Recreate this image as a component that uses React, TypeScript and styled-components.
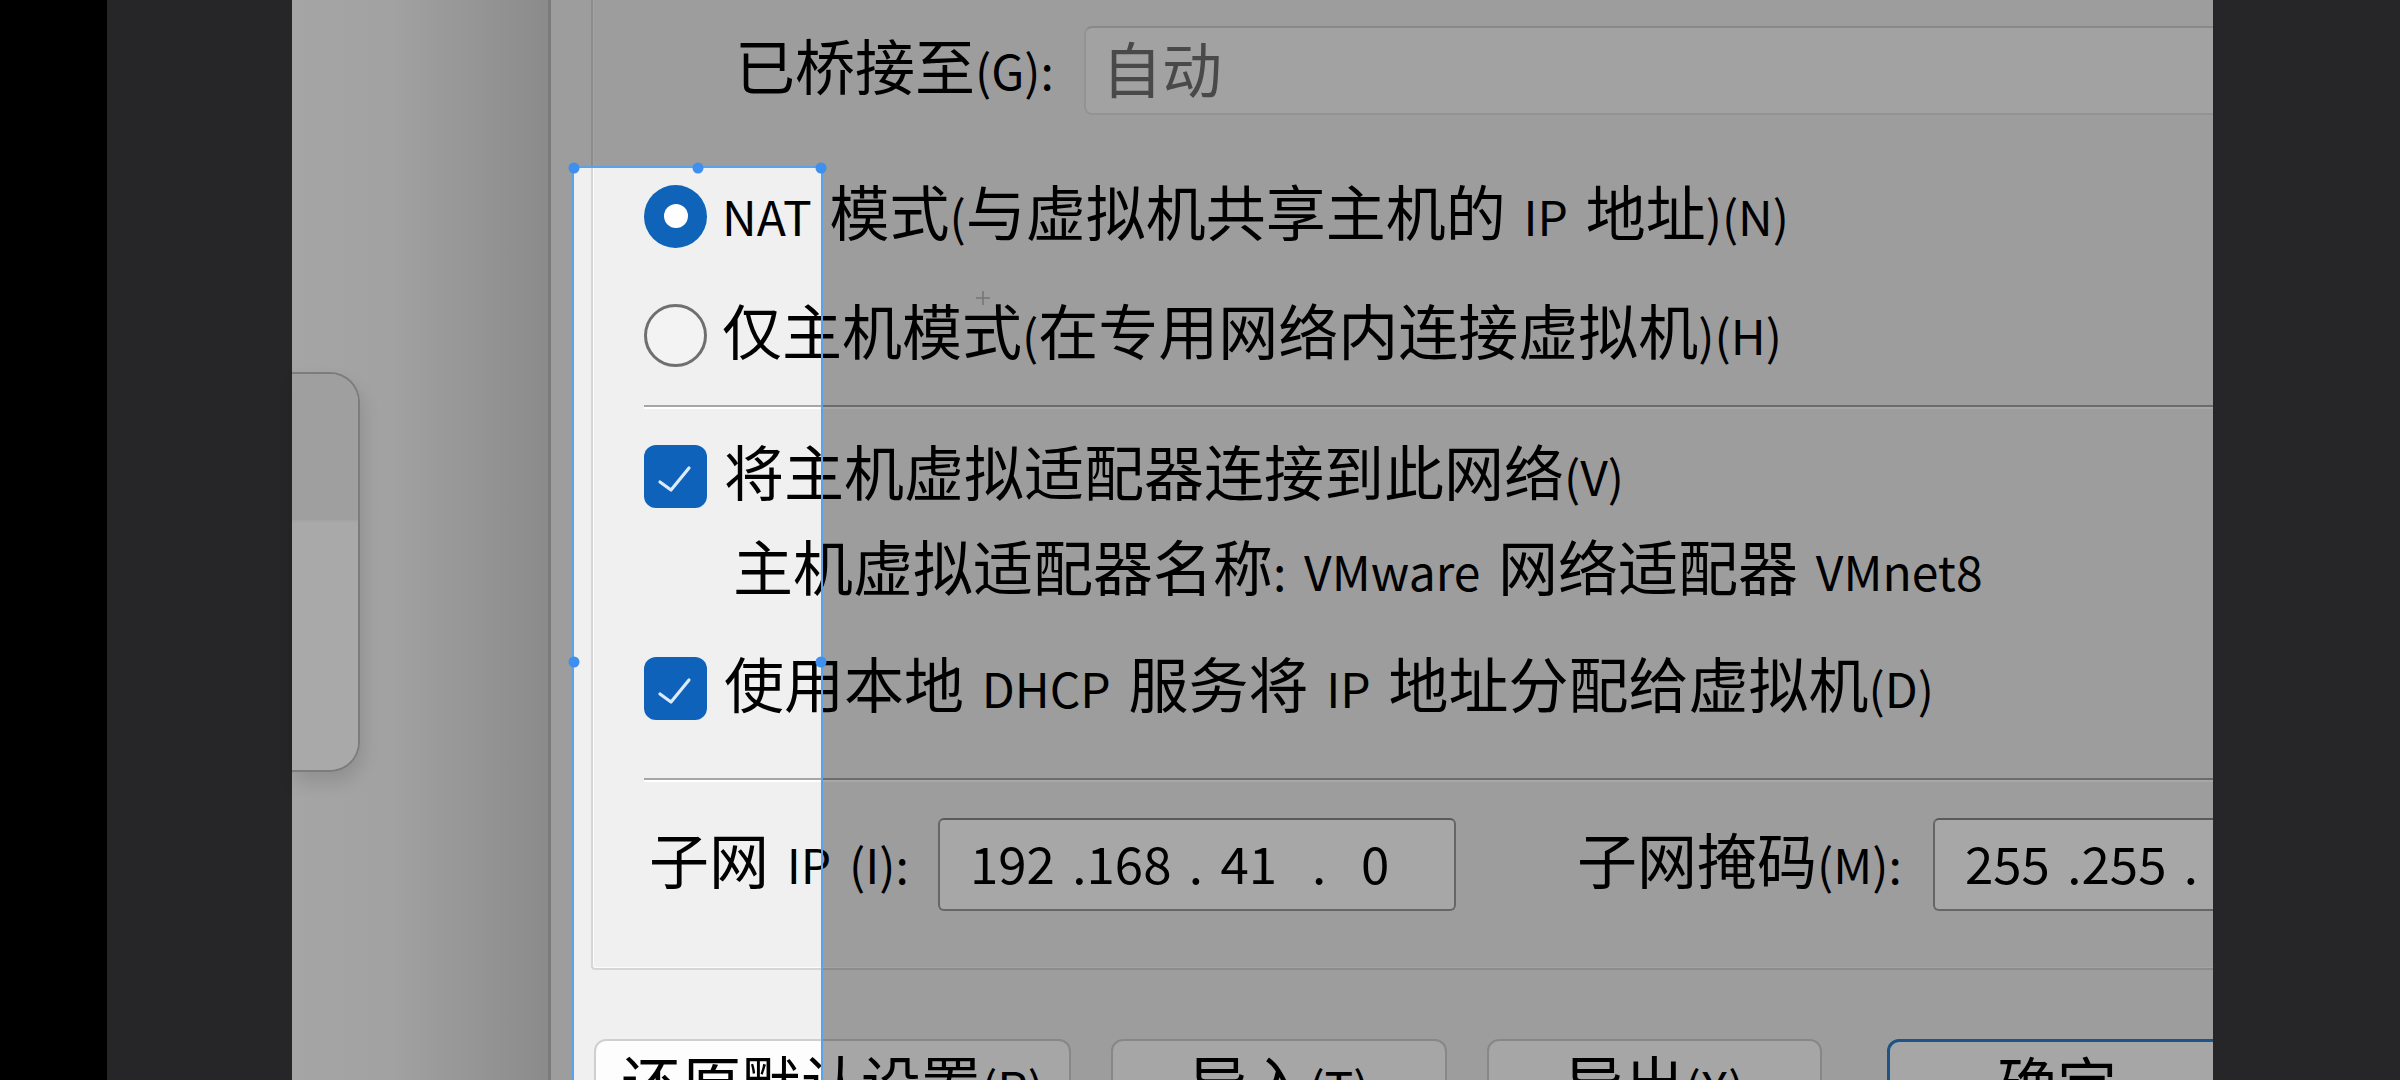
import React from "react";
import styled, { createGlobalStyle, css } from "styled-components";

const GlobalStyle = createGlobalStyle`
  html, body {
    margin: 0;
    padding: 0;
    background: #000;
  }
  body {
    width: 2400px;
    height: 1080px;
    overflow: hidden;
    font-family: "Noto Sans CJK SC", "Noto Sans", sans-serif;
  }
`;

const Screen = styled.div`
  display: flex;
  width: 2400px;
  height: 1080px;
  overflow: hidden;
  background: #000;
`;

const BlackBar = styled.div`
  flex: none;
  width: 107px;
  background: #000;
`;

const SideBar = styled.div<{ $w: number }>`
  flex: none;
  width: ${(p) => p.$w}px;
  background: #262628;
`;

const Backdrop = styled.div`
  flex: none;
  box-sizing: border-box;
  width: 259px;
  padding-top: 372px;
  border-right: 3px solid #7b7b7b;
  background: linear-gradient(90deg, #a5a5a5 0%, #a2a2a2 38%, #959595 72%, #8b8b8b 100%);
`;

const BackCard = styled.div`
  width: 66px;
  height: 396px;
  display: flex;
  flex-direction: column;
  overflow: hidden;
  border: 2px solid #7c7c7c;
  border-left: none;
  border-radius: 0 30px 30px 0;
  box-shadow: 3px 10px 18px rgba(0, 0, 0, 0.12);
`;

const CardTop = styled.div`
  height: 146px;
  background: #9f9f9f;
  border-bottom: 2px solid #a4a4a4;
`;

const CardBottom = styled.div`
  flex: 1;
  background: #a9a9a9;
`;

const Dialog = styled.div`
  position: relative;
  flex: none;
  width: 1662px;
  height: 1080px;
  overflow: hidden;
  background: #f0f0f0;
  color: #000;
  font-size: 60px;
`;

const GroupBox = styled.div`
  display: flex;
  flex-direction: column;
  margin-left: 40px;
  padding: 26px 0 57px 51px;
  border-left: 2px solid #d6d6d6;
  border-bottom: 2px solid #d6d6d6;
  border-bottom-left-radius: 4px;
  box-shadow: inset 1px -1px 0 #fbfbfb;
`;

const Lat = styled.span`
  font-size: 48px;
  word-spacing: 7px;
`;

const Text = styled.span`
  padding-bottom: 8px;
`;

const TopRow = styled.div`
  display: flex;
  align-items: center;
  height: 89px;
  padding-left: 91px;
  white-space: nowrap;
`;

const BridgeLabel = styled.span`
  flex: none;
  width: 349px;
  line-height: 80px;
  padding-bottom: 8px;
`;

const Select = styled.div`
  flex: 1;
  box-sizing: border-box;
  height: 89px;
  display: flex;
  align-items: center;
  padding: 0 0 8px 16px;
  background: #f8f8f8;
  border: 2px solid #e0e0e0;
  border-right: none;
  border-top-color: #d2d2d2;
  border-radius: 8px 0 0 8px;
  color: #707070;
`;

const OptionRow = styled.div<{ $mt: number }>`
  display: flex;
  align-items: center;
  height: 80px;
  line-height: 80px;
  margin-top: ${(p) => p.$mt}px;
  white-space: nowrap;
`;

const Radio = styled.span<{ $checked?: boolean }>`
  flex: none;
  box-sizing: border-box;
  width: 63px;
  height: 63px;
  margin-right: 15px;
  border-radius: 50%;
  display: flex;
  align-items: center;
  justify-content: center;
  ${(p) =>
    p.$checked
      ? css`
          background: #0f63b8;
        `
      : css`
          border: 3px solid #6f6f6f;
          background: #f3f3f3;
        `}
`;

const RadioDot = styled.span`
  width: 24px;
  height: 24px;
  border-radius: 50%;
  background: #fff;
`;

const Checkbox = styled.span`
  flex: none;
  width: 63px;
  height: 63px;
  margin-right: 17px;
  border-radius: 12px;
  background: #0f62ba;
  display: flex;
`;

const SubLabel = styled.div`
  margin-top: 18px;
  height: 70px;
  line-height: 62px;
  padding-left: 89px;
  white-space: nowrap;
`;

const Separator = styled.div<{ $mt: number }>`
  flex: none;
  margin-top: ${(p) => p.$mt}px;
  height: 2px;
  background: #a6a6a6;
  border-bottom: 2px solid #ffffff;
`;

const SubnetRow = styled.div`
  display: flex;
  align-items: center;
  margin-top: 36px;
  height: 93px;
  padding-left: 5px;
  white-space: nowrap;
`;

const FieldLabel = styled.span<{ $w: number; $ml?: number }>`
  flex: none;
  width: ${(p) => p.$w}px;
  margin-left: ${(p) => p.$ml ?? 0}px;
  line-height: 80px;
  padding-bottom: 8px;
`;

const IpBox = styled.div<{ $w?: number }>`
  box-sizing: border-box;
  height: 93px;
  ${(p) =>
    p.$w
      ? css`
          flex: none;
          width: ${p.$w}px;
        `
      : css`
          flex: 1;
          border-right: none;
        `}
  display: flex;
  align-items: center;
  padding: 0 0 6px 30px;
  background: #ffffff;
  border: 2px solid #9c9c9c;
  border-top-color: #8a8a8a;
  border-radius: 6px;
  font-size: 51px;
  white-space: pre;
  word-spacing: 6px;
`;

const ButtonRow = styled.div`
  display: flex;
  gap: 40px;
  margin-top: 69px;
  padding-left: 43px;
`;

const DialogButton = styled.div<{ $w: number; $primary?: boolean }>`
  flex: none;
  box-sizing: border-box;
  width: ${(p) => p.$w}px;
  height: 110px;
  background: #fdfdfd;
  border: 2px solid #cfcfcf;
  border-radius: 12px;
  text-align: center;
  line-height: 80px;
  white-space: nowrap;
  ${(p) =>
    p.$primary &&
    css`
      margin-left: 25px;
      border: 3px solid #2f7fcf;
    `}
`;

const Crosshair = styled.svg`
  position: absolute;
  left: 424px;
  top: 290px;
  width: 16px;
  height: 16px;
`;

const Selection = styled.div`
  position: absolute;
  left: 21px;
  top: 166px;
  width: 251px;
  height: 992px;
  box-sizing: border-box;
  border: 2px solid #5aa3ea;
  box-shadow: 0 0 0 4000px rgba(0, 0, 0, 0.345);
  z-index: 2;
`;

const Handle = styled.span<{ $x: string; $y: string }>`
  position: absolute;
  left: ${(p) => p.$x};
  top: ${(p) => p.$y};
  width: 11px;
  height: 11px;
  border-radius: 50%;
  background: #3d8ff0;
  transform: translate(-50%, -50%);
`;

const CheckMark = () => (
  <svg width="63" height="63" viewBox="0 0 63 63">
    <polyline
      points="16,37 27,45 45,23"
      fill="none"
      stroke="#dcebfb"
      strokeWidth="3.2"
      strokeLinecap="round"
      strokeLinejoin="round"
    />
  </svg>
);

export default function App() {
  return (
    <>
      <GlobalStyle />
      <Screen>
        <BlackBar />
        <SideBar $w={185} />
        <Backdrop>
          <BackCard>
            <CardTop />
            <CardBottom />
          </BackCard>
        </Backdrop>
        <Dialog>
          <GroupBox>
            <TopRow>
              <BridgeLabel>
                已桥接至<Lat>(G):</Lat>
              </BridgeLabel>
              <Select>自动</Select>
            </TopRow>

            <OptionRow $mt={61}>
              <Radio $checked>
                <RadioDot />
              </Radio>
              <Text>
                <Lat>NAT </Lat>模式<Lat>(</Lat>与虚拟机共享主机的<Lat> IP </Lat>地址<Lat>)(N)</Lat>
              </Text>
            </OptionRow>

            <OptionRow $mt={39}>
              <Radio />
              <Text>
                仅主机模式<Lat>(</Lat>在专用网络内连接虚拟机<Lat>)(H)</Lat>
              </Text>
            </OptionRow>

            <Separator $mt={30} />

            <OptionRow $mt={27}>
              <Checkbox>
                <CheckMark />
              </Checkbox>
              <Text>
                将主机虚拟适配器连接到此网络<Lat>(V)</Lat>
              </Text>
            </OptionRow>

            <SubLabel>
              主机虚拟适配器名称<Lat>: VMware </Lat>网络适配器<Lat> VMnet8</Lat>
            </SubLabel>

            <OptionRow $mt={44}>
              <Checkbox>
                <CheckMark />
              </Checkbox>
              <Text>
                使用本地<Lat> DHCP </Lat>服务将<Lat> IP </Lat>地址分配给虚拟机<Lat>(D)</Lat>
              </Text>
            </OptionRow>

            <Separator $mt={50} />

            <SubnetRow>
              <FieldLabel $w={289}>
                子网<Lat> IP (I):</Lat>
              </FieldLabel>
              <IpBox $w={518}>{"192 .168 . 41  .  0"}</IpBox>
              <FieldLabel $w={356} $ml={121}>
                子网掩码<Lat>(M):</Lat>
              </FieldLabel>
              <IpBox>{"255 .255 .   255 .  0"}</IpBox>
            </SubnetRow>
          </GroupBox>

          <ButtonRow>
            <DialogButton $w={477}>
              还原默认设置<Lat>(R)</Lat>
            </DialogButton>
            <DialogButton $w={336}>
              导入<Lat>(T)</Lat>
            </DialogButton>
            <DialogButton $w={335}>
              导出<Lat>(X)</Lat>
            </DialogButton>
            <DialogButton $w={340} $primary>
              确定
            </DialogButton>
          </ButtonRow>

          <Crosshair viewBox="0 0 16 16">
            <path d="M8 1V15M1 8H15" stroke="#b4b4b4" strokeWidth="1.6" fill="none" />
          </Crosshair>

          <Selection>
            <Handle $x="0%" $y="0%" />
            <Handle $x="50%" $y="0%" />
            <Handle $x="100%" $y="0%" />
            <Handle $x="0%" $y="50%" />
            <Handle $x="100%" $y="50%" />
          </Selection>
        </Dialog>
        <SideBar $w={187} />
      </Screen>
    </>
  );
}
